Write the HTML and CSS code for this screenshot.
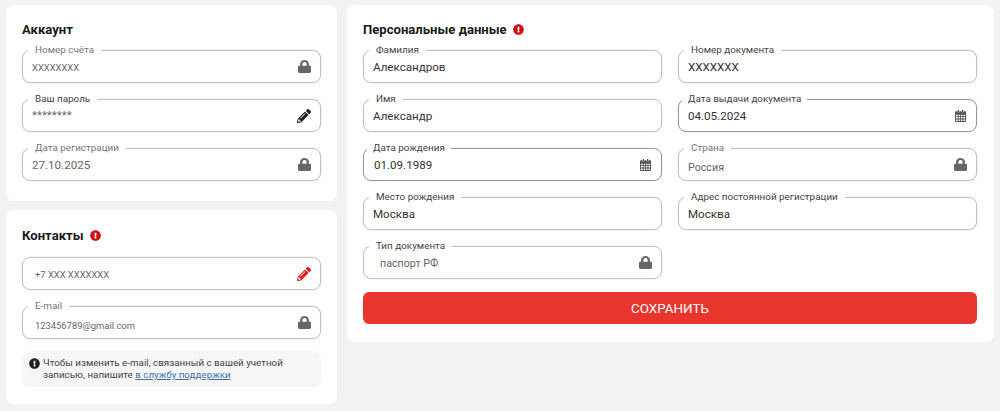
FILE: index.html
```html
<!DOCTYPE html>
<html lang="ru">

<head>
    <meta charset="UTF-8">
    <meta name="viewport" content="width=device-width, initial-scale=1.0">
    <title>Профиль</title>
    <link rel="stylesheet" href="styles.css">
</head>

<body>
    <svg class="sprite" xmlns="http://www.w3.org/2000/svg">
        <symbol id="i-lock" viewBox="0 0 448 512" preserveAspectRatio="none">
            <path d="M400 224h-24v-72C376 68.2 307.8 0 224 0S72 68.2 72 152v72H48c-26.5 0-48 21.5-48 48v192c0 26.5 21.5 48 48 48h352c26.5 0 48-21.5 48-48V272c0-26.5-21.5-48-48-48zm-104 0H152v-72c0-39.7 32.3-72 72-72s72 32.3 72 72v72z"/>
        </symbol>
        <symbol id="i-pencil" viewBox="0 0 512 512">
            <path d="M497.9 142.1l-46.1 46.1c-4.7 4.7-12.3 4.7-17 0l-111-111c-4.7-4.7-4.7-12.3 0-17l46.1-46.1c18.7-18.7 49.1-18.7 67.9 0l60.1 60.1c18.8 18.7 18.8 49.1 0 67.9zM284.2 99.8L21.6 362.4.4 483.9c-2.9 16.4 11.4 30.6 27.8 27.8l121.5-21.3 262.6-262.6c4.7-4.7 4.7-12.3 0-17l-111-111c-4.8-4.7-12.4-4.7-17.1 0zM124.1 339.9c-5.5-5.5-5.5-14.3 0-19.8l154-154c5.5-5.5 14.3-5.5 19.8 0s5.5 14.3 0 19.8l-154 154c-5.5 5.5-14.3 5.5-19.8 0zM88 424h48v36.3l-64.5 11.3-31.1-31.1L51.7 376H88v48z"/>
        </symbol>
        <symbol id="i-alert" viewBox="0 0 512 512">
            <path d="M504 256c0 136.997-111.043 248-248 248S8 392.997 8 256C8 119.083 119.043 8 256 8s248 111.083 248 248zm-248 50c-25.405 0-46 20.595-46 46s20.595 46 46 46 46-20.595 46-46-20.595-46-46-46zm-43.673-165.346l7.418 136c.347 6.364 5.609 11.346 11.982 11.346h48.546c6.373 0 11.635-4.982 11.982-11.346l7.418-136c.375-6.874-5.098-12.654-11.982-12.654h-63.383c-6.884 0-12.356 5.78-11.981 12.654z"/>
        </symbol>
        <symbol id="i-calendar" viewBox="0 0 12 13">
            <path d="M3 0h1.4v2H3zM7.6 0H9v2H7.6z"/>
            <path fill-rule="evenodd" d="M1 1.2h1.6v1.3h2.2V1.2h2.4v1.3h2.2V1.2H11a1 1 0 0 1 1 1V12a1 1 0 0 1-1 1H1a1 1 0 0 1-1-1V2.2a1 1 0 0 1 1-1zM1 5v1.7h2V5zm3 0v1.7h1.6V5zm2.6 0v1.7H8.2V5zm2.6 0v1.7H11V5zM1 7.6v1.7h2V7.6zm3 0v1.7h1.6V7.6zm2.6 0v1.7H8.2V7.6zm2.6 0v1.7H11V7.6zM1 10.2V12h2v-1.8zm3 0V12h1.6v-1.8zm2.6 0V12h1.6v-1.8zm2.6 0V12H11v-1.8z"/>
        </symbol>
    </svg>

    <main class="page">
        <div class="side">
            <section class="card card-account">
                <h2 class="card-title">Аккаунт</h2>
                <div class="fields">
                    <div class="field">
                        <span class="field-label muted">Номер счёта</span>
                        <span class="field-value tiny grey">XXXXXXXX</span>
                        <svg class="icon lock"><use href="#i-lock"/></svg>
                    </div>
                    <div class="field">
                        <span class="field-label">Ваш пароль</span>
                        <span class="field-value stars">********</span>
                        <svg class="icon pencil"><use href="#i-pencil"/></svg>
                    </div>
                    <div class="field">
                        <span class="field-label muted">Дата регистрации</span>
                        <span class="field-value grey">27.10.2025</span>
                        <svg class="icon lock"><use href="#i-lock"/></svg>
                    </div>
                </div>
            </section>

            <section class="card card-contacts">
                <h2 class="card-title">Контакты <svg class="alert"><use href="#i-alert"/></svg></h2>
                <div class="fields">
                    <div class="field">
                        <span class="field-value tiny grey inset">+7 XXX XXXXXXX</span>
                        <svg class="icon pencil red"><use href="#i-pencil"/></svg>
                    </div>
                    <div class="field">
                        <span class="field-label muted">E-mail</span>
                        <span class="field-value tiny grey inset down">123456789@gmail.com</span>
                        <svg class="icon lock"><use href="#i-lock"/></svg>
                    </div>
                </div>
                <p class="note">
                    <svg class="note-icon"><use href="#i-alert"/></svg>
                    <span>Чтобы изменить e-mail, связанный с вашей учетной записью, напишите <a href="#">в службу поддержки</a></span>
                </p>
            </section>
        </div>

        <section class="card card-personal">
            <h2 class="card-title">Персональные данные <svg class="alert"><use href="#i-alert"/></svg></h2>
            <div class="grid">
                <div class="field">
                    <span class="field-label">Фамилия</span>
                    <span class="field-value">Александров</span>
                </div>
                <div class="field">
                    <span class="field-label">Номер документа</span>
                    <span class="field-value">XXXXXXX</span>
                </div>
                <div class="field">
                    <span class="field-label">Имя</span>
                    <span class="field-value">Александр</span>
                </div>
                <div class="field active">
                    <span class="field-label tight">Дата выдачи документа</span>
                    <span class="field-value">04.05.2024</span>
                    <svg class="icon calendar"><use href="#i-calendar"/></svg>
                </div>
                <div class="field active">
                    <span class="field-label tight">Дата рождения</span>
                    <span class="field-value date">01.09.1989</span>
                    <svg class="icon calendar"><use href="#i-calendar"/></svg>
                </div>
                <div class="field">
                    <span class="field-label muted">Страна</span>
                    <span class="field-value small grey down">Россия</span>
                    <svg class="icon lock"><use href="#i-lock"/></svg>
                </div>
                <div class="field">
                    <span class="field-label">Место рождения</span>
                    <span class="field-value">Москва</span>
                </div>
                <div class="field">
                    <span class="field-label">Адрес постоянной регистрации</span>
                    <span class="field-value">Москва</span>
                </div>
                <div class="field">
                    <span class="field-label">Тип документа</span>
                    <span class="field-value small grey doc">паспорт РФ</span>
                    <svg class="icon lock"><use href="#i-lock"/></svg>
                </div>
            </div>
            <button class="save-btn" type="button">СОХРАНИТЬ</button>
        </section>
    </main>
</body>

</html>
```

FILE: styles.css
```css
* {
    box-sizing: border-box;
}

body {
    margin: 0;
    height: 411px;
    overflow: hidden;
    background-color: #f2f2f2;
    font-family: Roboto, "Liberation Sans", sans-serif;
    color: #222;
}

.sprite {
    display: none;
}

.page {
    display: flex;
    align-items: flex-start;
    gap: 10px;
    padding: 5px 6px;
}

.side {
    display: flex;
    flex-direction: column;
    gap: 9px;
    width: 331px;
    flex-shrink: 0;
}

.card {
    background-color: #fff;
    border-radius: 8px;
    padding: 16px;
}

.card-account {
    height: 196px;
}

.card-contacts {
    height: 194px;
}

.card-personal {
    flex: 1;
    height: 337px;
    padding-right: 17px;
}

.card-title {
    display: flex;
    align-items: center;
    gap: 6px;
    height: 16px;
    margin: 0 0 13px;
    font-size: 13.1px;
    font-weight: 700;
    color: #1a1a1a;
}

.card-contacts .card-title {
    height: 18px;
    margin-bottom: 13px;
}

.alert {
    width: 11px;
    height: 11px;
    fill: #d0100c;
}

.fields {
    display: flex;
    flex-direction: column;
    gap: 16px;
}

.grid {
    display: grid;
    grid-template-columns: 299px 299px;
    gap: 16px;
}

.field {
    position: relative;
    display: flex;
    align-items: center;
    height: 33px;
    padding: 0 9px;
    background-color: #fff;
    border: 1px solid #c2c2c2;
    border-radius: 8px;
    box-shadow: 0 0 0 1px rgba(0, 0, 0, 0.04);
}

.field.active {
    border-color: #999;
}

.field-label {
    position: absolute;
    top: -7px;
    left: 5px;
    padding: 0 7px;
    background-color: #fff;
    font-size: 9.9px;
    line-height: 12px;
    white-space: nowrap;
    color: #444;
}

.field-label.muted {
    color: #777;
}

.field-label.tight {
    left: 3px;
    padding: 0 6px 0 6px;
}

.field-value {
    font-size: 11.6px;
    color: #333;
}

.field-value.small {
    font-size: 10.7px;
}

.field-value.tiny {
    margin-top: 1px;
    font-size: 9.4px;
}

.field-value.grey {
    color: #666;
}

.field-value.stars {
    margin-top: -1px;
    font-size: 11.5px;
    color: #666;
}

.field-value.down {
    margin-top: 5px;
}

.field-value.inset {
    margin-left: 3px;
}

.field-value.date {
    margin-left: 1px;
}

.field-value.doc {
    margin-top: 2px;
    margin-left: 7px;
}

.icon {
    margin-left: auto;
    flex-shrink: 0;
}

.lock {
    width: 13px;
    height: 13px;
    fill: #666;
}

.pencil {
    width: 14px;
    height: 14px;
    fill: #222;
}

.pencil.red {
    fill: #d9201c;
}

.calendar {
    width: 11px;
    height: 12px;
    margin-right: 1px;
    fill: #555;
}

.note {
    display: flex;
    gap: 3px;
    margin: 12px 0 0;
    padding: 6px 7px;
    height: 36px;
    background-color: #f6f6f6;
    border-radius: 8px;
    font-size: 9.8px;
    line-height: 12px;
    color: #444;
}

.note-icon {
    width: 11px;
    height: 11px;
    margin-top: 1px;
    flex-shrink: 0;
    fill: #222;
}

.note a {
    color: #3d73a8;
}

.save-btn {
    display: block;
    width: 100%;
    height: 32px;
    margin-top: 13px;
    background-color: #e8352d;
    border: none;
    border-radius: 6px;
    font-family: inherit;
    font-size: 13.4px;
    font-weight: 400;
    color: #fff;
    cursor: pointer;
}
```
